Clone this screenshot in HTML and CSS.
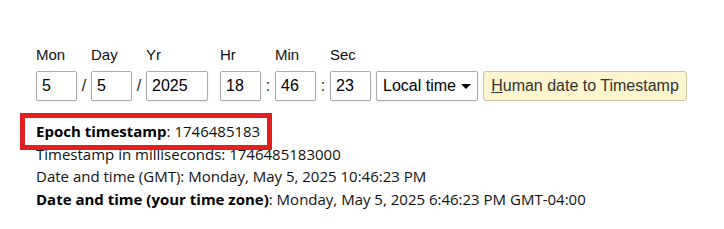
FILE: index.html
```html
<!DOCTYPE html>
<html lang="en">
  <head>
    <meta charset="UTF-8" />
    <title>Epoch converter</title>
    <link rel="stylesheet" href="styles.css">
  </head>
  <body>
    <div class="converter">
      <form class="date-form">
        <div class="field">
          <label class="field-label">Mon</label>
          <input class="field-input w-small" type="text" value="5">
        </div>
        <span class="sep">/</span>
        <div class="field">
          <label class="field-label">Day</label>
          <input class="field-input w-small" type="text" value="5">
        </div>
        <span class="sep">/</span>
        <div class="field">
          <label class="field-label">Yr</label>
          <input class="field-input w-year" type="text" value="2025">
        </div>
        <span class="sep sep-blank"></span>
        <div class="field">
          <label class="field-label">Hr</label>
          <input class="field-input w-small" type="text" value="18">
        </div>
        <span class="sep">:</span>
        <div class="field">
          <label class="field-label">Min</label>
          <input class="field-input w-small" type="text" value="46">
        </div>
        <span class="sep">:</span>
        <div class="field">
          <label class="field-label">Sec</label>
          <input class="field-input w-small" type="text" value="23">
        </div>
        <div class="field">
          <span class="field-label">&nbsp;</span>
          <div class="zone-select">Local time <span class="caret"></span></div>
        </div>
        <div class="field">
          <span class="field-label">&nbsp;</span>
          <button type="button" class="convert-btn"><u>H</u>uman date to Timestamp</button>
        </div>
      </form>

      <div class="results">
        <div class="highlight"></div>
        <div class="result-line"><b>Epoch timestamp</b>: 1746485183</div>
        <div class="result-line">Timestamp in milliseconds: 1746485183000</div>
        <div class="result-line">Date and time (GMT): Monday, May 5, 2025 10:46:23 PM</div>
        <div class="result-line"><b>Date and time (your time zone)</b>: Monday, May 5, 2025 6:46:23 PM GMT-04:00</div>
      </div>
    </div>
  </body>
</html>
```

FILE: styles.css
```css
* {
  box-sizing: border-box;
}
body {
  margin: 0;
  background: #ffffff;
  color: #000000;
}
.converter {
  padding: 45px 0 0 36px;
}
.date-form {
  display: flex;
  align-items: flex-end;
  font-family: "Liberation Sans", Arial, sans-serif;
  margin: 0;
}
.field {
  display: flex;
  flex-direction: column;
}
.field-label {
  font-size: 15px;
  line-height: 20px;
  height: 20px;
  margin-bottom: 6px;
  color: #111;
}
.field-input {
  height: 30px;
  border: 1px solid #a9a9a9;
  border-radius: 2px;
  padding: 0 5px;
  font-family: "Liberation Sans", Arial, sans-serif;
  font-size: 16px;
  color: #000;
  box-shadow: 0 1px 2px rgba(0, 0, 0, 0.08);
}
.w-small {
  width: 41px;
}
.w-year {
  width: 62px;
}
.sep {
  width: 14px;
  height: 30px;
  line-height: 30px;
  font-size: 16px;
  text-align: center;
  color: #222;
}
.sep-blank {
  width: 12px;
}
.zone-select {
  margin-left: 5px;
  width: 102px;
  height: 30px;
  border: 1px solid #a9a9a9;
  border-radius: 2px;
  padding: 0 0 0 6px;
  display: flex;
  align-items: center;
  font-size: 16px;
  color: #000;
  background: #fff;
  box-shadow: 0 1px 2px rgba(0, 0, 0, 0.08);
}
.caret {
  display: inline-block;
  width: 0;
  height: 0;
  margin-left: 5px;
  border-left: 5px solid transparent;
  border-right: 5px solid transparent;
  border-top: 5px solid #000;
}
.convert-btn {
  margin-left: 5px;
  width: 204px;
  height: 30px;
  border: 1px solid #c8c2a0;
  border-radius: 3px;
  background: #fcf5cf;
  font-family: "Liberation Sans", Arial, sans-serif;
  font-size: 16px;
  color: #333;
  padding: 0 4px;
}
.results {
  position: relative;
  margin-top: 19px;
  font-family: "Open Sans", sans-serif;
  font-size: 15px;
  color: #111;
}
.result-line {
  line-height: 22.5px;
}
.result-line b {
  font-weight: 700;
  color: #000;
}
.highlight {
  position: absolute;
  left: -16px;
  top: -7px;
  width: 252px;
  height: 37px;
  border: 5px solid #e3201f;
}
```
